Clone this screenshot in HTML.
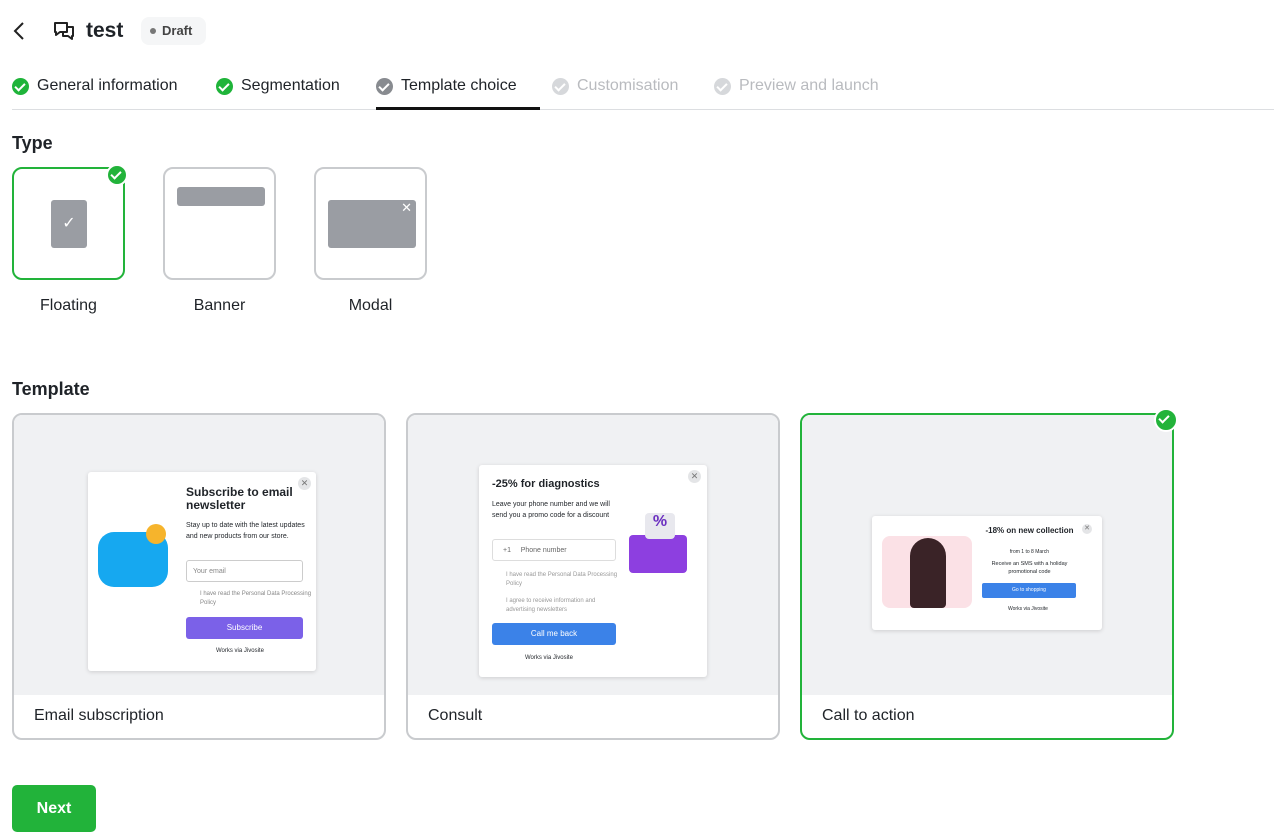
<!DOCTYPE html>
<html><head><meta charset="utf-8"><style>
*{box-sizing:border-box;margin:0;padding:0}
body{width:1274px;height:838px;background:#fff;font-family:"Liberation Sans",sans-serif;color:#1f2328;position:relative;overflow:hidden}
.a{position:absolute}
.tab{position:absolute;top:77px;font-size:16px;display:flex;align-items:center;gap:8px}
.ck{width:17px;height:17px;border-radius:50%;display:inline-block;position:relative}
.ck:after{content:"";position:absolute;left:5px;top:3px;width:4px;height:8px;border:solid #fff;border-width:0 2px 2px 0;transform:rotate(45deg)}
.tb{position:absolute;top:167px;width:113px;height:113px;border:2px solid #c9cbce;border-radius:10px}
.tl{position:absolute;top:297px;font-size:16px;width:113px;text-align:center}
.card{position:absolute;top:413px;width:374px;height:327px;border:2px solid #c9cbce;border-radius:10px;overflow:hidden}
.prev{position:absolute;left:0;top:0;right:0;height:280px;background:#f0f1f3}
.lab{position:absolute;left:20px;top:292px;font-size:16px}
.pop{position:absolute;background:#fff;box-shadow:0 1px 4px rgba(0,0,0,.15);border-radius:3px}
.x{position:absolute;width:13px;height:13px;border-radius:50%;background:#e4e5e7;font-size:9px;text-align:center;line-height:13px;color:#777}
</style></head><body>
<svg class="a" style="left:12px;top:21px" width="14" height="20" viewBox="0 0 14 20"><path d="M11 2 3 10l8 8" fill="none" stroke="#222" stroke-width="2"/></svg>
<svg class="a" style="left:52px;top:20px" width="24" height="22" viewBox="0 0 24 22"><path d="M3 3h12v9H8l-4 3v-3H3z" fill="none" stroke="#222" stroke-width="2" stroke-linejoin="round"/><path d="M15 7h6v9h-1v3l-4-3h-5v-4" fill="none" stroke="#222" stroke-width="2" stroke-linejoin="round"/></svg>
<div class="a" style="left:86px;top:19px;font-size:21px;font-weight:bold">test</div>
<div class="a" style="left:141px;top:17px;width:65px;height:28px;border-radius:8px;background:#f5f6f7;font-size:13px;font-weight:bold;color:#444;line-height:28px;padding-left:21px">Draft<span class="a" style="left:9px;top:11px;width:6px;height:6px;border-radius:50%;background:#777"></span></div>
<div class="tab" style="left:12px"><span class="ck" style="background:#1fb43a"></span>General information</div>
<div class="tab" style="left:216px"><span class="ck" style="background:#1fb43a"></span>Segmentation</div>
<div class="tab" style="left:376px"><span class="ck" style="background:#888b90"></span>Template choice</div>
<div class="tab" style="left:552px;color:#b9bbbf"><span class="ck" style="background:#d6d8db"></span>Customisation</div>
<div class="tab" style="left:714px;color:#b9bbbf"><span class="ck" style="background:#d6d8db"></span>Preview and launch</div>
<div class="a" style="left:12px;top:109px;width:1262px;height:1px;background:#dcdee1"></div>
<div class="a" style="left:376px;top:107px;width:164px;height:3px;background:#111"></div>

<div class="a" style="left:12px;top:133px;font-size:18px;font-weight:bold">Type</div>
<div class="tb" style="left:12px;border-color:#22b33a"><div class="a" style="left:37px;top:31px;width:36px;height:48px;background:#9a9da3;border-radius:3px;color:#fff;text-align:center;line-height:48px;font-size:16px">✓</div></div>
<span class="ck" style="position:absolute;left:106px;top:164px;width:22px;height:22px;background:#22b33a;border:2px solid #fff"></span>
<div class="tb" style="left:163px"><div class="a" style="left:12px;top:18px;width:88px;height:19px;background:#9a9da3;border-radius:3px"></div></div>
<div class="tb" style="left:314px"><div class="a" style="left:12px;top:31px;width:88px;height:48px;background:#9a9da3;border-radius:3px;color:#fff;font-size:13px;text-align:right;padding-right:4px;line-height:16px">✕</div></div>
<div class="tl" style="left:12px">Floating</div>
<div class="tl" style="left:163px">Banner</div>
<div class="tl" style="left:314px">Modal</div>

<div class="a" style="left:12px;top:379px;font-size:18px;font-weight:bold">Template</div>

<div class="card" style="left:12px"><div class="prev">
<div class="pop" style="left:74px;top:57px;width:228px;height:199px">
<div class="a" style="left:10px;top:60px;width:70px;height:55px;background:#16a8f0;border-radius:16px"></div>
<div class="a" style="left:58px;top:52px;width:20px;height:20px;background:#f6b42c;border-radius:50%"></div>
<div class="a" style="left:98px;top:14px;font-size:12px;font-weight:bold;line-height:13px">Subscribe to email newsletter</div>
<div class="a" style="left:98px;top:48px;font-size:7px;line-height:11px;width:120px">Stay up to date with the latest updates and new products from our store.</div>
<div class="a" style="left:98px;top:88px;width:117px;height:22px;border:1px solid #ccc;border-radius:3px;font-size:7px;color:#888;padding:7px 6px">Your email</div>
<div class="a" style="left:98px;top:118px;font-size:6px;color:#888;padding-left:14px;line-height:9px">I have read the Personal Data Processing Policy</div>
<div class="a" style="left:98px;top:145px;width:117px;height:22px;background:#7b61e8;border-radius:3px;font-size:8px;color:#fff;text-align:center;line-height:22px">Subscribe</div>
<div class="a" style="left:128px;top:176px;font-size:6px">Works via Jivosite</div>
<div class="x" style="left:210px;top:5px">✕</div></div></div><div class="lab">Email subscription</div></div>

<div class="card" style="left:406px"><div class="prev">
<div class="pop" style="left:71px;top:50px;width:228px;height:212px">
<div class="a" style="left:13px;top:13px;font-size:11px;font-weight:bold">-25% for diagnostics</div>
<div class="a" style="left:13px;top:34px;font-size:7px;line-height:11px;width:125px">Leave your phone number and we will send you a promo code for a discount</div>
<div class="a" style="left:13px;top:74px;width:124px;height:22px;border:1px solid #ddd;border-radius:3px;font-size:7px;color:#666;padding:7px 10px">+1 &nbsp;&nbsp;&nbsp;&nbsp;Phone number</div>
<div class="a" style="left:13px;top:106px;font-size:6px;color:#999;padding-left:14px;line-height:9px;width:130px">I have read the Personal Data Processing Policy</div>
<div class="a" style="left:13px;top:132px;font-size:6px;color:#999;padding-left:14px;line-height:9px;width:130px">I agree to receive information and advertising newsletters</div>
<div class="a" style="left:13px;top:158px;width:124px;height:22px;background:#3b82e8;border-radius:3px;font-size:8px;color:#fff;text-align:center;line-height:22px">Call me back</div>
<div class="a" style="left:46px;top:190px;font-size:6px">Works via Jivosite</div>
<div class="a" style="left:150px;top:70px;width:58px;height:38px;background:#8d3fe0;border-radius:4px"></div>
<div class="a" style="left:166px;top:48px;width:30px;height:26px;background:#e8e8ee;border-radius:4px;font-size:16px;font-weight:bold;color:#6b2fc0;text-align:center">%</div>
<div class="x" style="left:209px;top:5px">✕</div></div></div><div class="lab">Consult</div></div>

<div class="card" style="left:800px;border-color:#22b33a"><div class="prev">
<div class="pop" style="left:70px;top:101px;width:230px;height:114px">
<div class="a" style="left:10px;top:20px;width:90px;height:72px;background:#fbe1e6;border-radius:8px"></div>
<div class="a" style="left:38px;top:22px;width:36px;height:70px;background:#3a2327;border-radius:18px 18px 4px 4px"></div>
<div class="a" style="left:110px;top:10px;width:95px;text-align:center;font-size:8px;font-weight:bold;line-height:9px">-18% on new collection</div>
<div class="a" style="left:110px;top:33px;width:95px;text-align:center;font-size:5px">from 1 to 8 March</div>
<div class="a" style="left:110px;top:44px;width:95px;text-align:center;font-size:5.5px;line-height:8px">Receive an SMS with a holiday promotional code</div>
<div class="a" style="left:110px;top:67px;width:94px;height:15px;background:#3b82e8;border-radius:2px;color:#fff;font-size:5px;text-align:center;line-height:15px">Go to shopping</div>
<div class="a" style="left:136px;top:90px;font-size:5px">Works via Jivosite</div>
<div class="x" style="left:210px;top:8px;width:10px;height:10px;line-height:10px;font-size:7px">✕</div></div></div><div class="lab">Call to action</div></div>
<span class="ck" style="position:absolute;left:1154px;top:408px;width:24px;height:24px;background:#22b33a;border:2px solid #fff"></span>

<div class="a" style="left:12px;top:785px;width:84px;height:47px;background:#22b33a;border-radius:5px;color:#fff;font-size:16px;font-weight:bold;text-align:center;line-height:47px">Next</div>
</body></html>
